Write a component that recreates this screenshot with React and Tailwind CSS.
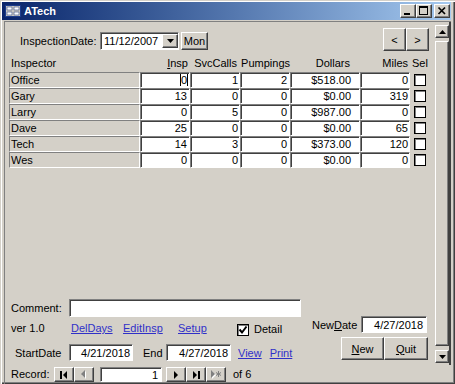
import React from "react";

const raised =
  "border border-t-white border-l-white border-r-[#404040] border-b-[#404040] shadow-[inset_-1px_-1px_0_#808080]";
const sunken =
  "border border-t-[#808080] border-l-[#808080] border-r-white border-b-white shadow-[inset_1px_1px_0_#404040]";

const rows = [
  ["Office", "0", "1", "2", "$518.00", "0"],
  ["Gary", "13", "0", "0", "$0.00", "319"],
  ["Larry", "0", "5", "0", "$987.00", "0"],
  ["Dave", "25", "0", "0", "$0.00", "65"],
  ["Tech", "14", "3", "0", "$373.00", "120"],
  ["Wes", "0", "0", "0", "$0.00", "0"],
];

function TitleBtn({ children, className = "" }) {
  return (
    <div
      className={`w-[16px] h-[14px] bg-[#d4d0c8] ${raised} flex items-center justify-center ${className}`}
    >
      {children}
    </div>
  );
}

function Arrow({ dir = "down", color = "#000" }) {
  const pts = {
    down: "0,0 7,0 3.5,4",
    up: "0,4 7,4 3.5,0",
  }[dir];
  return (
    <svg width="7" height="4" viewBox="0 0 7 4">
      <polygon points={pts} fill={color} />
    </svg>
  );
}

function NavBtn({ children }) {
  return (
    <div
      className={`w-[20px] h-[15px] bg-[#d4d0c8] ${raised} flex items-center justify-center`}
    >
      {children}
    </div>
  );
}

function CheckBox({ checked }) {
  return (
    <div className="w-[12px] h-[12px] bg-white border border-black shadow-[inset_1px_1px_0_#808080] flex items-center justify-center">
      {checked && (
        <svg width="10" height="10" viewBox="0 0 10 10">
          <polyline
            points="1.5,4.5 4,7.5 8.5,1.5"
            fill="none"
            stroke="#000"
            strokeWidth="2"
          />
        </svg>
      )}
    </div>
  );
}

export default function App() {
  return (
    <div className="w-[455px] h-[384px] bg-[#d4d0c8] overflow-hidden text-[11px] leading-[14px] text-black font-['Liberation_Sans',Arial,sans-serif] pt-[2px] pl-[2px] flex flex-col shadow-[inset_1px_1px_0_#d4d0c8,inset_2px_2px_0_#fff,inset_-1px_-1px_0_#404040,inset_-2px_-2px_0_#808080]">
      {/* Title bar */}
      <div className="h-[18px] w-[449px] shrink-0 flex items-center bg-linear-to-r from-[#0a246a] to-[#a6caf0] pl-[3px] pr-[1px]">
        <svg width="16" height="12" viewBox="0 0 16 12">
          <rect x="0" y="0" width="16" height="12" fill="#1c3c8c" />
          <rect x="1" y="1" width="14" height="10" fill="#d4d0c8" />
          <rect x="2" y="2" width="5" height="3" fill="#fff" stroke="#0a246a" strokeWidth="0.5" />
          <rect x="9" y="2" width="5" height="3" fill="#fff" stroke="#0a246a" strokeWidth="0.5" />
          <rect x="2" y="7" width="5" height="3" fill="#fff" stroke="#0a246a" strokeWidth="0.5" />
          <rect x="9" y="7" width="5" height="3" fill="#fff" stroke="#0a246a" strokeWidth="0.5" />
        </svg>
        <span className="ml-[3px] text-white font-bold text-[11px]">ATech</span>
        <div className="ml-auto flex items-center">
          <TitleBtn>
            <svg width="14" height="12" viewBox="0 0 14 12">
              <rect x="3" y="8" width="6" height="2" fill="#000" />
            </svg>
          </TitleBtn>
          <TitleBtn>
            <svg width="14" height="12" viewBox="0 0 14 12">
              <rect x="2.5" y="1.5" width="8" height="8" fill="none" stroke="#000" />
              <rect x="2" y="2" width="9" height="1" fill="#000" />
            </svg>
          </TitleBtn>
          <TitleBtn className="ml-[2px]">
            <svg width="14" height="12" viewBox="0 0 14 12">
              <path d="M3.5 2.5 L10 9 M10 2.5 L3.5 9" stroke="#000" strokeWidth="1.7" />
            </svg>
          </TitleBtn>
        </div>
      </div>

      {/* Client */}
      <div className="mt-[1px] ml-[2px] w-[447px] flex-1 flex flex-col border-l border-t border-l-[#808080] border-t-[#808080]">
        <div className="h-[343px] flex">
          {/* Form */}
          <div className="w-[430px] h-[343px] flex flex-col">
            {/* Top */}
            <div className="h-[34px] flex items-start shrink-0">
              <div className="mt-[10px] ml-[15px] flex items-center">
                <span className="w-[80px]">InspectionDate:</span>
                <div className={`w-[79px] h-[18px] bg-white ${sunken} flex items-center`}>
                  <span className="pl-[3px] flex-1">11/12/2007</span>
                  <div
                    className={`w-[16px] h-[14px] bg-[#d4d0c8] ${raised} flex items-center justify-center`}
                  >
                    <Arrow dir="down" />
                  </div>
                </div>
                <div
                  className={`ml-[2px] w-[27px] h-[18px] bg-[#d4d0c8] ${raised} flex items-center justify-center`}
                >
                  Mon
                </div>
              </div>
              <div className="ml-auto mt-[6px] mr-[6px] flex">
                <div
                  className={`w-[23px] h-[23px] bg-[#d4d0c8] ${raised} flex items-center justify-center`}
                >
                  &lt;
                </div>
                <div
                  className={`w-[23px] h-[23px] bg-[#d4d0c8] ${raised} flex items-center justify-center`}
                >
                  &gt;
                </div>
              </div>
            </div>

            {/* Header */}
            <div className="h-[14px] flex items-center pl-[4px] shrink-0">
              <div className="w-[131px] pl-[2px]">Inspector</div>
              <div className="w-[50px] text-right pr-[2px]">
                <span className="underline">I</span>nsp
              </div>
              <div className="w-[50px] text-right pr-[3px]">SvcCalls</div>
              <div className="w-[50px] text-right pr-0">Pumpings</div>
              <div className="w-[70px] text-right pr-[10px]">Dollars</div>
              <div className="w-[50px] text-right pr-[2px]">Miles</div>
              <div className="ml-[2px]">Sel</div>
            </div>

            {/* Rows */}
            <div className="mt-[2px] flex flex-col">
              {rows.map((r, i) => (
                <div key={i} className="h-[16px] flex items-center pl-[4px]">
                  <div className="w-[131px] h-[16px] bg-[#d4d0c8] border border-t-[#808080] border-l-[#808080] border-r-white border-b-white flex items-center pl-[1px]">
                    {r[0]}
                  </div>
                  <div className={`w-[50px] h-[16px] bg-white ${sunken} flex items-center justify-end pr-[1px]`}>
                    {i === 0 ? (
                      <span className="border-l border-r border-black leading-[12px]">{r[1]}</span>
                    ) : (
                      <span className="pr-[1px]">{r[1]}</span>
                    )}
                  </div>
                  <div className={`w-[50px] h-[16px] bg-white ${sunken} flex items-center justify-end pr-[1px]`}>
                    {r[2]}
                  </div>
                  <div className={`w-[50px] h-[16px] bg-white ${sunken} flex items-center justify-end pr-[2px]`}>
                    {r[3]}
                  </div>
                  <div className={`w-[70px] h-[16px] bg-white ${sunken} flex items-center justify-end pr-[8px]`}>
                    {r[4]}
                  </div>
                  <div className={`w-[50px] h-[16px] bg-white ${sunken} flex items-center justify-end pr-[1px]`}>
                    {r[5]}
                  </div>
                  <div className="ml-[4px]">
                    <CheckBox />
                  </div>
                </div>
              ))}
            </div>

            {/* Lower */}
            <div className="mt-auto h-[66px] flex items-start shrink-0">
              <div className="w-[300px] flex flex-col">
                <div className="h-[18px] flex items-center">
                  <span className="w-[64px] pl-[6px]">Comment:</span>
                  <div className={`w-[232px] h-[18px] bg-white ${sunken}`} />
                </div>
                <div className="mt-[3px] h-[16px] flex items-center">
                  <span className="w-[66px] pl-[6px]">ver 1.0</span>
                  <span className="w-[52px]">
                    <span className="underline text-[#3030c8]">DelDays</span>
                  </span>
                  <span className="w-[55px]">
                    <span className="underline text-[#3030c8]">EditInsp</span>
                  </span>
                  <span className="w-[59px]">
                    <span className="underline text-[#3030c8]">Setup</span>
                  </span>
                  <div className="mt-[4px]">
                    <CheckBox checked />
                  </div>
                  <span className="ml-[5px] mt-[2px]">Detail</span>
                </div>
                <div className="mt-[8px] h-[17px] flex items-center">
                  <span className="w-[64px] pl-[10px]">StartDate</span>
                  <div className={`w-[64px] h-[17px] bg-white ${sunken} flex items-center justify-end pr-[2px]`}>
                    4/21/2018
                  </div>
                  <span className="ml-[10px] w-[23px]">End</span>
                  <div className={`w-[65px] h-[17px] bg-white ${sunken} flex items-center justify-end pr-[2px]`}>
                    4/27/2018
                  </div>
                  <span className="ml-[7px] underline text-[#3030c8]">View</span>
                  <span className="ml-[8px] underline text-[#3030c8]">Print</span>
                </div>
              </div>
              <div className="ml-[7px] mt-[17px] flex flex-col">
                <div className="h-[17px] flex items-center">
                  <span className="w-[49px]">
                    New<span className="underline">D</span>ate
                  </span>
                  <div className={`w-[66px] h-[17px] bg-white ${sunken} flex items-center justify-end pr-[3px]`}>
                    4/27/2018
                  </div>
                </div>
                <div className="mt-[4px] ml-[29px] flex">
                  <div
                    className={`w-[43px] h-[23px] bg-[#d4d0c8] ${raised} flex items-center justify-center`}
                  >
                    <span>
                      <span className="underline">N</span>ew
                    </span>
                  </div>
                  <div
                    className={`w-[44px] h-[23px] bg-[#d4d0c8] ${raised} flex items-center justify-center`}
                  >
                    <span>
                      <span className="underline">Q</span>uit
                    </span>
                  </div>
                </div>
              </div>
            </div>
          </div>

          {/* Scrollbar */}
          <div className="w-[16px] h-[343px] border-r-2 border-r-[#404040] flex flex-col pt-[3px] pb-[2px]">
            <div
              className={`w-[14px] h-[13px] bg-[#d4d0c8] ${raised} flex items-center justify-center`}
            >
              <Arrow dir="up" />
            </div>
            <div className={`mt-[3px] w-[14px] flex-1 bg-[#d4d0c8] ${raised}`} />
            <div
              className={`mt-[4px] w-[14px] h-[13px] bg-[#d4d0c8] ${raised} flex items-center justify-center`}
            >
              <Arrow dir="down" />
            </div>
          </div>
        </div>

        {/* Record bar */}
        <div className="h-[19px] flex items-start pt-[2px]">
          <span className="w-[49px] pl-[6px] leading-[15px]">Record:</span>
          <NavBtn>
            <svg width="10" height="8" viewBox="0 0 10 8">
              <rect x="1" y="0" width="2" height="8" fill="#000" />
              <polygon points="8,0 8,8 4,4" fill="#000" />
            </svg>
          </NavBtn>
          <NavBtn>
            <svg width="10" height="9" viewBox="0 0 10 9">
              <polygon points="7,1 7,9 3,5" fill="#fff" />
              <polygon points="6,0 6,8 2,4" fill="#808080" />
            </svg>
          </NavBtn>
          <div className={`ml-[6px] w-[62px] h-[15px] bg-white ${sunken} flex items-center justify-end pr-[3px]`}>
            1
          </div>
          <div className="ml-[4px] flex">
            <NavBtn>
              <svg width="10" height="8" viewBox="0 0 10 8">
                <polygon points="3,0 3,8 7,4" fill="#000" />
              </svg>
            </NavBtn>
            <NavBtn>
              <svg width="10" height="8" viewBox="0 0 10 8">
                <polygon points="2,0 2,8 6,4" fill="#000" />
                <rect x="7" y="0" width="2" height="8" fill="#000" />
              </svg>
            </NavBtn>
            <NavBtn>
              <svg width="12" height="9" viewBox="0 0 12 9">
                <polygon points="2,1 2,9 6,5" fill="#fff" />
                <polygon points="1,0 1,8 5,4" fill="#808080" />
                <path d="M8.5 1 V7 M6 2.5 L11 5.5 M11 2.5 L6 5.5" stroke="#808080" strokeWidth="1" />
              </svg>
            </NavBtn>
          </div>
          <span className="ml-[7px] leading-[15px]">of 6</span>
        </div>
      </div>
    </div>
  );
}
